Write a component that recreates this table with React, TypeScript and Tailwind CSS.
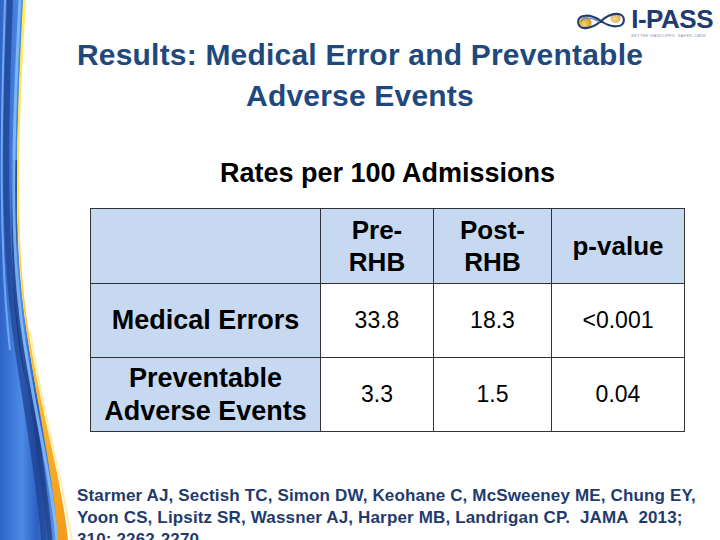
const rows = [
  { label: ["Medical Errors"], pre: "33.8", post: "18.3", p: "<0.001" },
  { label: ["Preventable", "Adverse Events"], pre: "3.3", post: "1.5", p: "0.04" },
];

function Swoosh() {
  return (
    <svg className="absolute left-0 top-0" width="90" height="540" viewBox="0 0 90 540">
      <defs>
        <linearGradient id="blue" x1="0" y1="0" x2="1" y2="0">
          <stop offset="0" stopColor="#2f64c8" />
          <stop offset="0.35" stopColor="#4d8be6" />
          <stop offset="0.6" stopColor="#2c5fc0" />
          <stop offset="1" stopColor="#6aa6f0" />
        </linearGradient>
        <linearGradient id="gold" x1="0" y1="0" x2="0" y2="1">
          <stop offset="0" stopColor="#fff15a" />
          <stop offset="0.45" stopColor="#ffd83a" />
          <stop offset="1" stopColor="#f59a1a" />
        </linearGradient>
      </defs>
      <path d="M0 0 L24 0 C15 150 13 250 28 340 C40 420 56 480 62 540 L0 540 Z" fill="url(#blue)" />
      <path d="M10 0 C4 150 4 260 18 350 C28 420 40 480 44 540" stroke="#1c3f8e" strokeWidth="6" fill="none" opacity="0.7" />
      <path d="M15 160 C12 260 16 330 28 380 C38 440 46 500 50 540" stroke="#0f2a6a" strokeWidth="5" fill="none" opacity="0.6" />
      <path d="M5 0 C0 150 0 260 10 350" stroke="#7fb6f5" strokeWidth="2" fill="none" opacity="0.8" />
      <path d="M20 0 C12 150 10 250 24 340 C36 420 52 480 57 540" stroke="#8cc2ff" strokeWidth="3" fill="none" opacity="0.8" />
      <path d="M26 0 C17 150 15 250 30 340 C43 420 62 480 68 540 L58 540 C54 480 40 420 28 340 C14 250 15 150 23 0 Z" fill="url(#gold)" />
      <path d="M30 330 C42 410 60 470 72 540" stroke="#ffe58a" strokeWidth="2" fill="none" opacity="0.7" />
    </svg>
  );
}

function Logo() {
  return (
    <div className="absolute right-[7px] top-[5px] flex items-start gap-[4px]">
      <svg width="52" height="28" viewBox="0 0 50 26" className="mt-[2px]">
        <defs>
          <radialGradient id="lg" cx="0.4" cy="0.6" r="0.6">
            <stop offset="0" stopColor="#f3d27a" />
            <stop offset="1" stopColor="#c99a2e" />
          </radialGradient>
        </defs>
        <ellipse cx="10" cy="15" rx="6" ry="6" fill="url(#lg)" />
        <ellipse cx="39" cy="10" rx="5" ry="5" fill="url(#lg)" opacity="0.8" />
        <path d="M3 14 C3 6 15 6 25 13 C35 20 47 20 47 12 C47 4 35 4 25 13 C15 22 3 22 3 14 Z" stroke="#1f3d73" strokeWidth="2" fill="none" />
        <path d="M6 14 C6 9 15 9 24 14" stroke="#6e86b0" strokeWidth="1" fill="none" />
      </svg>
      <div className="flex flex-col">
        <span className="text-[#1f3b70] font-bold text-[26px] leading-[28px] tracking-[-0.5px]">I-PASS</span>
        <span className="text-[#8a96b0] text-[4px] leading-[5px] tracking-[0.3px]">BETTER HANDOFFS. SAFER CARE.</span>
      </div>
    </div>
  );
}

export default function App() {
  return (
    <div className="relative w-[720px] h-[540px] overflow-hidden bg-white" style={{ fontFamily: '"Liberation Sans", Arial, sans-serif' }}>
      <Swoosh />
      <Logo />

      <div className="relative pt-[34px] text-center text-[#1f497d] font-bold text-[30px] leading-[41px] tracking-[0.2px]">
        <div>Results: Medical Error and Preventable</div>
        <div>Adverse Events</div>
      </div>

      <div className="relative ml-[90px] w-[595px] mt-[40px] text-center font-bold text-[27px] leading-[34px] text-black">
        Rates per 100 Admissions
      </div>

      <table className="relative ml-[90px] mt-[18px] w-[595px] border-collapse text-black">
        <thead>
          <tr className="h-[75px] bg-[#c6d9f1]">
            <th className="w-[230px] border border-[#333]"></th>
            <th className="w-[113px] border border-[#333] text-[26px] leading-[32px] font-bold">
              Pre-
              <br />
              RHB
            </th>
            <th className="w-[118px] border border-[#333] text-[26px] leading-[32px] font-bold">
              Post-
              <br />
              RHB
            </th>
            <th className="border border-[#333] text-[26px] leading-[32px] font-bold">p-value</th>
          </tr>
        </thead>
        <tbody>
          {rows.map((r, i) => (
            <tr key={i} className="h-[74px]">
              <td className="bg-[#c6d9f1] border border-[#333] text-center font-bold text-[27px] leading-[33px]">
                {r.label.map((l) => (
                  <div key={l}>{l}</div>
                ))}
              </td>
              <td className="border border-[#333] text-center text-[23px]">{r.pre}</td>
              <td className="border border-[#333] text-center text-[23px]">{r.post}</td>
              <td className="border border-[#333] text-center text-[23px]">{r.p}</td>
            </tr>
          ))}
        </tbody>
      </table>

      <p className="relative ml-[77px] mt-[53px] whitespace-nowrap text-[#1f3b6e] font-bold text-[17px] leading-[22px] tracking-[0.15px]">
        Starmer AJ, Sectish TC, Simon DW, Keohane C, McSweeney ME, Chung EY,
        <br />
        Yoon CS, Lipsitz SR, Wassner AJ, Harper MB, Landrigan CP.&nbsp; JAMA&nbsp; 2013;
        <br />
        310: 2262-2270.
      </p>
    </div>
  );
}
